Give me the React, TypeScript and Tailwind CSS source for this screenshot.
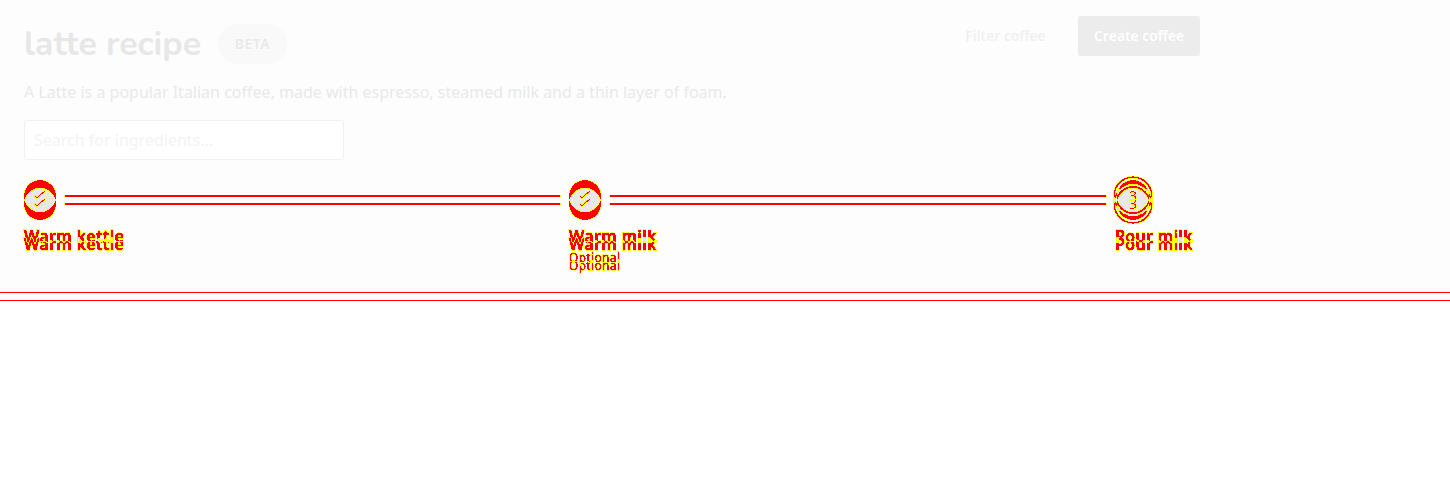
import React from "react";

function ChangeFilter() {
  return (
    <svg width="0" height="0" className="absolute" aria-hidden="true">
      <filter id="change" x="-50%" y="-100%" width="200%" height="400%" colorInterpolationFilters="sRGB">
        <feOffset in="SourceAlpha" dy="8" result="moved" />
        <feComposite in="SourceAlpha" in2="moved" operator="xor" />
        <feColorMatrix values="0 0 0 0 1  0 0 0 1 0  0 0 0 0 0  0 0 0 1 0" />
        <feComponentTransfer result="changed">
          <feFuncG type="discrete" tableValues="1 1 1 1 1 1 1 0 0 0" />
          <feFuncA type="discrete" tableValues="0 1 1 1 1 1 1 1 1 1 1 1 1 1 1 1 1 1 1 1 1 1 1 1 1" />
        </feComponentTransfer>
        <feComposite in="SourceAlpha" in2="moved" operator="in" />
        <feColorMatrix values="0 0 0 0 0.91  0 0 0 0 0.91  0 0 0 0 0.91  0 0 0 1 0" result="same" />
        <feMerge>
          <feMergeNode in="same" />
          <feMergeNode in="changed" />
        </feMerge>
      </filter>
    </svg>
  );
}

function Connector() {
  return (
    <div className="mt-[15px] mr-2 ml-2 flex grow flex-col gap-1.5">
      <div className="h-0.5 border-x border-[#ffff00] bg-[#ff0000]" />
      <div className="h-0.5 border-x border-[#ffff00] bg-[#ff0000]" />
    </div>
  );
}

function Marker({ active = false }: { active?: boolean }) {
  return (
    <svg width="32" height="32" viewBox="0 0 32 32" className="shrink-0 overflow-visible">
      <g filter="url(#change)">
        <circle cx="16" cy="16" r="16" />
        {active && <circle cx="16" cy="16" r="18.8" fill="none" stroke="black" strokeWidth="1.8" />}
      </g>
      {active ? (
        <text x="16" y="21" textAnchor="middle" fontSize="14" fontWeight="600" fontFamily="Open Sans" filter="url(#change)">3</text>
      ) : (
        <path d="M10.5 15.5 13 17.8 20.8 11" fill="none" stroke="black" strokeWidth="1.1" filter="url(#change)" />
      )}
    </svg>
  );
}

function Step({ label, optional, active, last, className }: { label: string; optional?: boolean; active?: boolean; last?: boolean; className: string }) {
  return (
    <div className={className}>
      <div className={active ? "flex h-8 pl-0.5" : "flex h-8"}>
        <Marker active={active} />
        {!last && <Connector />}
      </div>
      <div className="mt-3 w-fit text-base leading-6 font-semibold tracking-[0.34px] whitespace-nowrap [-webkit-text-stroke:0.5px] [filter:url(#change)]">{label}</div>
      {optional && <div className="mt-0.5 w-fit text-xs leading-4 tracking-[0.3px] [-webkit-text-stroke:0.4px] [filter:url(#change)]">Optional</div>}
    </div>
  );
}

export default function App() {
  return (
    <div className="h-[500px] overflow-hidden bg-white font-['Noto_Sans',sans-serif] text-[#e9e9e9]">
      <ChangeFilter />
      <header className="h-[292px] bg-[#fdfdfd] pl-6">
        <div className="flex h-[76px] w-[1176px] justify-between">
          <div className="flex items-start pt-6">
            <h1 className="w-[194px] font-['Nunito',sans-serif] text-[34px] leading-10 font-bold whitespace-nowrap text-[#e7e7e7]">latte recipe</h1>
            <span className="flex h-10 w-[69px] items-center justify-center rounded-full bg-[#f9f9f9] text-sm font-semibold tracking-[0.5px]">BETA</span>
          </div>
          <div className="flex pt-4 font-['Open_Sans',sans-serif] text-sm font-semibold">
            <button className="h-10 w-[113px] text-[#f0f0f0]">Filter coffee</button>
            <button className="ml-4 h-10 w-[122px] rounded-[2px] bg-[#ececec] text-white">Create coffee</button>
          </div>
        </div>
        <p className="pt-1 text-base leading-6">A Latte is a popular Italian coffee, made with espresso, steamed milk and a thin layer of foam.</p>
        <input className="mt-4 block h-10 w-80 rounded-[2px] border border-[#f1f1f1] bg-white px-[9px] text-base placeholder:text-[#f3f3f3]" placeholder="Search for ingredients..." />
        <div className="mt-5 flex">
          <Step label="Warm kettle" className="w-[545px]" />
          <Step label="Warm milk" optional className="w-[546px]" />
          <Step label="Pour milk" active last className="w-[85px]" />
        </div>
      </header>
      <div className="h-[9px] border-y border-[#ff0000] bg-white" />
    </div>
  );
}
